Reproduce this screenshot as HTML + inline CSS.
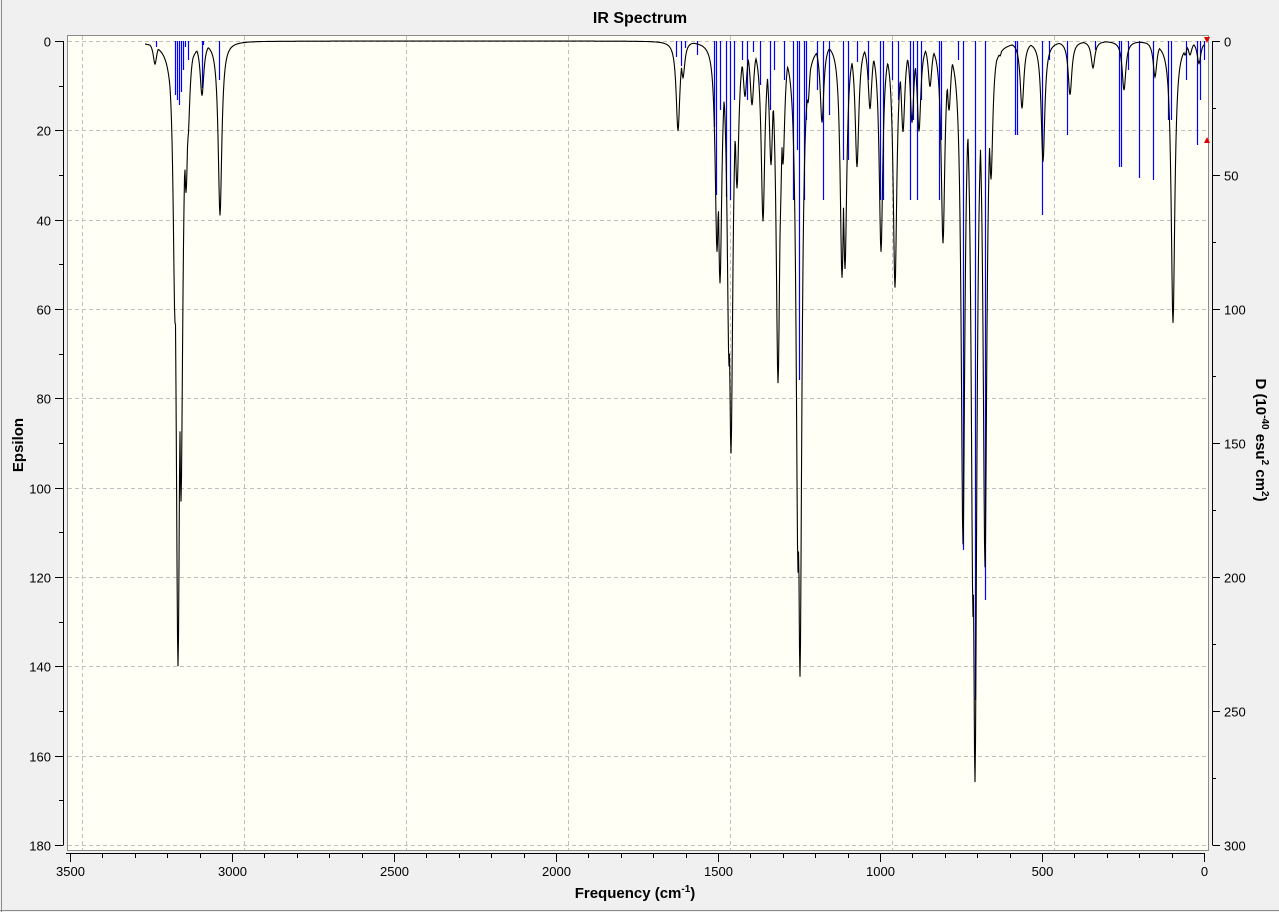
<!DOCTYPE html>
<html><head><meta charset="utf-8"><style>
html,body{margin:0;padding:0;background:#f0f0f0;width:1279px;height:912px;overflow:hidden;font-family:"Liberation Sans",sans-serif}
</style></head><body>
<svg id="s" width="1279" height="912" xmlns="http://www.w3.org/2000/svg" style="position:absolute;left:0;top:0">
<rect x="0" y="0" width="1279" height="912" fill="#f0f0f0"/>
<line x1="1.5" y1="0" x2="1.5" y2="912" stroke="#8a8a8a"/>
<line x1="0" y1="910.5" x2="1279" y2="910.5" stroke="#8a8a8a"/>
<text x="640" y="23" font-size="16" font-weight="bold" text-anchor="middle" fill="#000">IR Spectrum</text>
<rect x="67.5" y="35.5" width="1141" height="815" fill="#fffff5" stroke="#8c8c8c"/>
<g id="grid" stroke="#c0c0c0" stroke-dasharray="4,3" stroke-width="1"></g>
<g id="axes" stroke="#000" stroke-width="1"></g>
<g id="lbl" font-size="13" fill="#000"></g>
<g id="blue" stroke="#0000ff" stroke-width="1.2"></g>
<path id="spec" fill="none" stroke="#000" stroke-width="1.1"/>
<polygon points="1204,37 1210,37 1207,43" fill="#e00000"/>
<polygon points="1204,143 1210,143 1207,137" fill="#e00000"/>
<text x="635" y="898" font-size="15" font-weight="bold" text-anchor="middle">Frequency (cm<tspan font-size="10" dy="-6">-1</tspan><tspan dy="6">)</tspan></text>
<text transform="translate(23,445) rotate(-90)" font-size="15" font-weight="bold" text-anchor="middle">Epsilon</text>
<text transform="translate(1256,440) rotate(90)" font-size="15" font-weight="bold" text-anchor="middle">D (10<tspan font-size="10" dy="-6">-40</tspan><tspan dy="6"> esu</tspan><tspan font-size="10" dy="-6">2</tspan><tspan dy="6"> cm</tspan><tspan font-size="10" dy="-6">2</tspan><tspan dy="6">)</tspan></text>
</svg>
<script>
var NS="http://www.w3.org/2000/svg";
function el(g,t,a,txt){var e=document.createElementNS(NS,t);for(var k in a)e.setAttribute(k,a[k]);if(txt!==undefined)e.textContent=txt;document.getElementById(g).appendChild(e);}
for(var i=0;i<7;i++){var x=82+i*162+0.5;el("grid","line",{x1:x,y1:36,x2:x,y2:850});}
for(var i=0;i<10;i++){var y=41+i*89.33;y=Math.round(y)+0.5;el("grid","line",{x1:68,y1:y,x2:1208,y2:y});}
el("axes","line",{x1:63.5,y1:41,x2:63.5,y2:845});
for(var i=0;i<=18;i++){var y=Math.round(41+i*44.67)+0.5;el("axes","line",{x1:i%2?59:55,y1:y,x2:63.5,y2:y});
 if(i%2==0)el("lbl","text",{x:51,y:y+5,"text-anchor":"end"},String(i*10));}
el("axes","line",{x1:1212.5,y1:41,x2:1212.5,y2:845});
for(var i=0;i<=12;i++){var y=Math.round(41+i*66.97)+0.5;el("axes","line",{x1:1212.5,y1:y,x2:i%2?1216:1220,y2:y});
 if(i%2==0)el("lbl","text",{x:1224,y:y+5},String(i*25));}
el("axes","line",{x1:66,y1:853.5,x2:1205,y2:853.5});
for(var f=0;f<=3500;f+=100){var x=Math.round(1204-f*0.324)+0.5;el("axes","line",{x1:x,y1:853.5,x2:x,y2:f%500?858:862});
 if(f%500==0)el("lbl","text",{x:x,y:876,"text-anchor":"middle"},String(f));}
var P=[[155,5],[178,137],[181,100],[175,60],[186,32],[188,20],[202,12],[220,39],[678,20],[683,8],[717,46],[720,53],[731,90],[729,70],[737,32],[745,12],[752,14],[763,40],[771,27],[778,75],[780,38],[783,26],[800,139],[798,115],[808,13],[822,18],[842,52],[845,50],[857,28],[870,15],[881,47],[895,55],[903,20],[912,18],[919,20],[930,10],[943,45],[949,15],[963,112],[975,162],[973,124],[985,117],[991,30],[1000,3],[1022,15],[1043,27],[1070,12],[1093,6],[1124,11],[1155,8],[1173,63],[1185,3],[1199,5],[1176,4],[1190,3]];
var w=2.2,d="";
for(var x=145;x<=1204;x+=0.5){var s=0,m=0;for(var j=0;j<P.length;j++){var u=(x-P[j][0])/w;var v=P[j][1]/(1+u*u);s+=v;if(v>m)m=v;}
 var val=m+0.05*(s-m);
 var y=41+val*4.467;if(y>845)y=845;d+=(d?"L":"M")+x.toFixed(1)+","+y.toFixed(1);}
document.getElementById("spec").setAttribute("d",d);
var B=[[156,47],[175,95],[177,100],[179,105],[181,92],[183,70],[185,47],[188,60],[202,88],[219,80],[203,45],[676,57],[681,66],[685,48],[697,55],[714,127],[716,195],[720,110],[726,197],[730,200],[734,100],[742,60],[747,100],[753,52],[760,85],[770,110],[774,70],[784,80],[793,200],[797,150],[799,380],[804,200],[806,120],[817,90],[823,200],[829,115],[843,160],[848,160],[857,62],[868,80],[880,200],[883,200],[892,80],[898,100],[910,200],[913,120],[917,200],[921,100],[939,200],[941,140],[958,60],[963,550],[975,700],[985,600],[1015,135],[1017,135],[1042,215],[1049,60],[1067,135],[1095,50],[1119,167],[1121,167],[1128,70],[1139,178],[1153,180],[1168,120],[1171,120],[1186,80],[1197,145],[1200,100],[1204,60]];
for(var i=0;i<B.length;i++){var x=B[i][0]+0.5;el("blue","line",{x1:x,y1:41,x2:x,y2:B[i][1]});}
</script>
</body></html>
